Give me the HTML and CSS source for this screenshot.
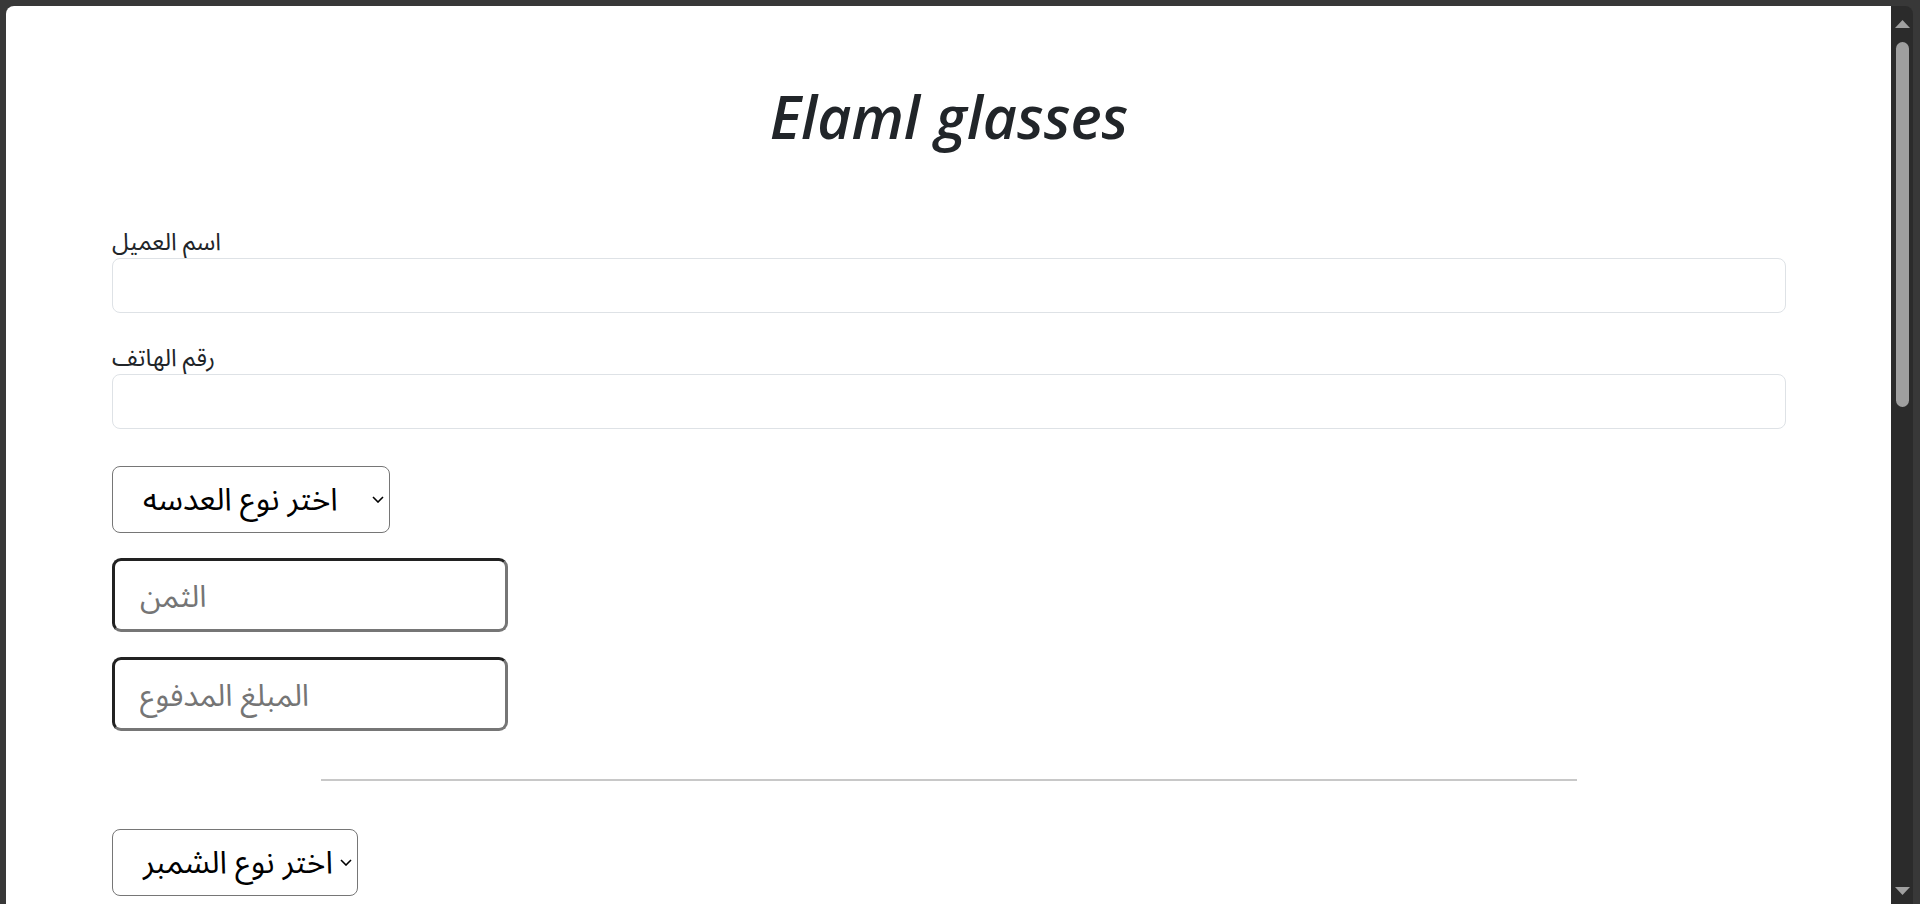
FILE: index.html
```html
<!DOCTYPE html>
<html lang="ar">
<head>
<meta charset="utf-8">
<title>Elaml glasses</title>
<link rel="stylesheet" href="styles.css">
</head>
<body>
<div class="frame">
  <main class="page">
    <h1 class="title">Elaml glasses</h1>
    <form class="form">
      <div class="field">
        <label class="label" for="name">اسم العميل</label>
        <input class="text-input" id="name" type="text">
      </div>
      <div class="field">
        <label class="label" for="phone">رقم الهاتف</label>
        <input class="text-input" id="phone" type="text">
      </div>
      <div class="select select-lens">
        <span class="select-text">اختر نوع العدسه</span>
        <svg class="chevron" width="12" height="7" viewBox="0 0 12 7"><polyline points="1,1 6,6 11,1" fill="none" stroke="#000" stroke-width="1.6"/></svg>
      </div>
      <input class="money-input money-first" type="text" placeholder="الثمن">
      <input class="money-input" type="text" placeholder="المبلغ المدفوع">
      <hr class="divider">
      <div class="select select-frame">
        <span class="select-text">اختر نوع الشمبر</span>
        <svg class="chevron" width="12" height="7" viewBox="0 0 12 7"><polyline points="1,1 6,6 11,1" fill="none" stroke="#000" stroke-width="1.6"/></svg>
      </div>
    </form>
  </main>
  <div class="scrollbar">
    <svg class="arrow" width="15" height="8" viewBox="0 0 15 8"><polygon points="7.5,0 15,8 0,8" fill="#a0a0a0"/></svg>
    <div class="thumb"></div>
    <div class="track-space"></div>
    <svg class="arrow" width="15" height="8" viewBox="0 0 15 8"><polygon points="0,0 15,0 7.5,8" fill="#a0a0a0"/></svg>
  </div>
</div>
</body>
</html>
```
FILE: styles.css
```css
html, body {
  margin: 0;
  padding: 0;
}
body {
  background: #383838;
  height: 904px;
  overflow: hidden;
  font-family: "Noto Sans Arabic", "Noto Sans", "DejaVu Sans", sans-serif;
  color: #212529;
}
.frame {
  display: flex;
  height: 904px;
  box-sizing: border-box;
  padding: 6px 7px 0 6px;
}
.page {
  flex: 1;
  background: #fff;
  border-top-left-radius: 8px;
  padding: 0 105px 0 106px;
  overflow: hidden;
}
.title {
  font-family: "Open Sans", "Noto Sans", sans-serif;
  font-style: italic;
  font-weight: 600;
  font-size: 59px;
  line-height: 70px;
  text-align: center;
  margin: 75px 0 77px;
  color: #212529;
}
.form {
  display: flex;
  flex-direction: column;
  align-items: flex-start;
}
.field {
  align-self: stretch;
  display: flex;
  flex-direction: column;
  margin-bottom: 31px;
}
.field:nth-child(2) {
  margin-bottom: 37px;
}
.label {
  font-size: 24px;
  line-height: 30px;
  color: #212529;
}
.text-input {
  height: 55px;
  box-sizing: border-box;
  border: 1px solid #dee2e6;
  border-radius: 8px;
  background: #fff;
  font-size: 16px;
  padding: 0 12px;
}
.select {
  display: flex;
  align-items: center;
  justify-content: space-between;
  box-sizing: border-box;
  height: 67px;
  border: 1px solid #767676;
  border-radius: 8px;
  padding: 0 5px 0 30px;
  background: #fff;
  color: #000;
}
.select-lens {
  width: 278px;
}
.select-frame {
  width: 246px;
}
.select-text {
  font-size: 31.5px;
  white-space: nowrap;
}
.chevron {
  flex: none;
}
.money-input {
  width: 396px;
  height: 74px;
  box-sizing: border-box;
  border-style: solid;
  border-width: 3px;
  border-color: #222 #767676 #767676 #222;
  border-radius: 9px;
  padding: 4px 25px 0;
  font-family: inherit;
  font-size: 30.5px;
  background: #fff;
  margin-top: 25px;
}
.money-input::placeholder {
  color: #757575;
}
.divider {
  align-self: center;
  width: 75%;
  border: 0;
  border-top: 2px solid #c8c8c8;
  margin: 48px 0 48px;
}
.scrollbar {
  width: 22px;
  background: #2b2b2b;
  border-top-right-radius: 8px;
  display: flex;
  flex-direction: column;
  align-items: center;
  padding: 14px 0 9px;
  box-sizing: border-box;
}
.arrow {
  flex: none;
}
.thumb {
  width: 13px;
  height: 365px;
  margin-top: 14px;
  border-radius: 7px;
  background: #9f9f9f;
}
.track-space {
  flex: 1;
}
```
